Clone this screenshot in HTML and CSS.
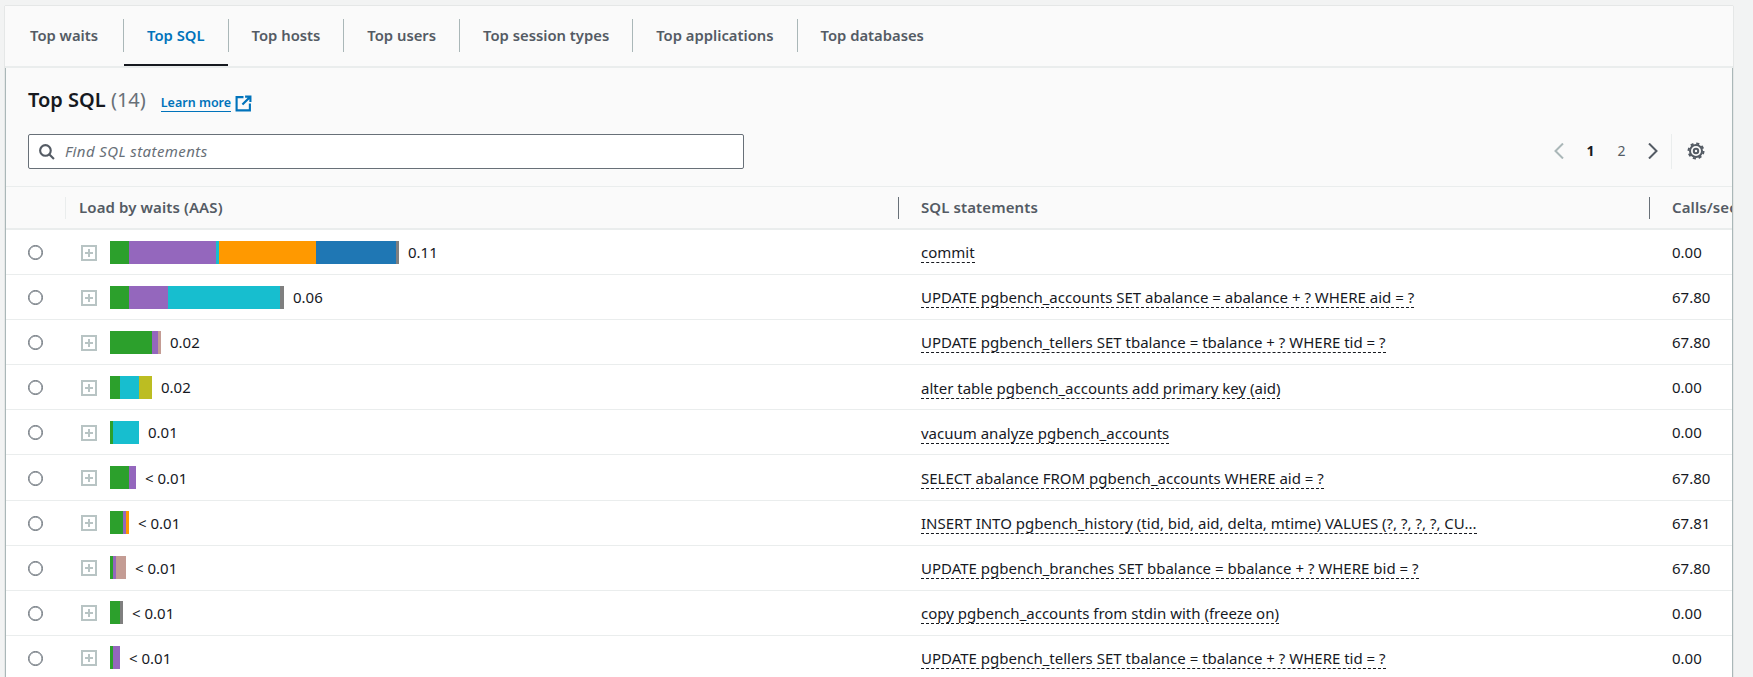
FILE: index.html
```html
<!DOCTYPE html>
<html>
<head>
    <title>Top SQL</title>
    <link rel="stylesheet" href="styles.css">
</head>
<body>

<div class="container">
    <div class="tabs">
        <a class="tab first">Top waits</a>
        <a class="tab active">Top SQL</a>
        <a class="tab">Top hosts</a>
        <a class="tab">Top users</a>
        <a class="tab">Top session types</a>
        <a class="tab">Top applications</a>
        <a class="tab last">Top databases</a>
    </div>

    <div class="panel">
        <div class="panel-head">
            <h2>Top SQL <span class="count">(14)</span></h2>
            <a class="learn"><span>Learn more</span>
                <svg class="ext" viewBox="0 0 16 16" width="17" height="17"><path d="M8 2H1.500v12.500H14V8M7 9l7-7M9.500 1.500H14.500V6.500" fill="none" stroke="#0073bb" stroke-width="2"/></svg>
            </a>
        </div>

        <div class="toolbar">
            <div class="search">
                <svg viewBox="0 0 16 16" width="17" height="17"><circle cx="7" cy="7" r="5" fill="none" stroke="#545b64" stroke-width="2"/><path d="M10.500 10.500L15 15" stroke="#545b64" stroke-width="2"/></svg>
                <span>Find SQL statements</span>
            </div>
            <div class="pager">
                <svg class="chev prev" viewBox="0 0 16 16" width="16" height="16"><path d="M12 0.500L4.500 8l7.500 7.500" fill="none" stroke="#aab7b8" stroke-width="2"/></svg>
                <span class="page current">1</span>
                <span class="page">2</span>
                <svg class="chev next" viewBox="0 0 16 16" width="16" height="16"><path d="M4 0.500L11.500 8 4 15.500" fill="none" stroke="#545b64" stroke-width="2"/></svg>
                <span class="pager-sep"></span>
                <svg class="gear" viewBox="0 0 18 18" width="18" height="18"><circle cx="9" cy="9" r="6" fill="none" stroke="#545b64" stroke-width="2"/><circle cx="9" cy="9" r="7.500" fill="none" stroke="#545b64" stroke-width="2" stroke-dasharray="3.100 2.790"/><circle cx="9" cy="9" r="2.200" fill="none" stroke="#545b64" stroke-width="2"/></svg>
            </div>
        </div>

        <div class="row head">
            <div class="cell-load"><span class="first-sep"></span>Load by waits (AAS)</div>
            <div class="cell-sql"><span class="col-sep"></span>SQL statements</div>
            <div class="cell-calls"><span class="col-sep"></span>Calls/sec</div>
        </div>

        <div class="row">
            <div class="cell-load"><span class="radio"></span><span class="expand"></span>
                <div class="bar"><i class="green" style="width:19px"></i><i class="purple" style="width:87px"></i><i class="cyan" style="width:3px"></i><i class="orange" style="width:97px"></i><i class="blue" style="width:80px"></i><i class="gray" style="width:3px"></i></div>
                <span class="val">0.11</span></div>
            <div class="cell-sql"><span class="sql">commit</span></div>
            <div class="cell-calls">0.00</div>
        </div>
        <div class="row">
            <div class="cell-load"><span class="radio"></span><span class="expand"></span>
                <div class="bar"><i class="green" style="width:19px"></i><i class="purple" style="width:39px"></i><i class="cyan" style="width:112px"></i><i class="gray" style="width:4px"></i></div>
                <span class="val">0.06</span></div>
            <div class="cell-sql"><span class="sql">UPDATE pgbench_accounts SET abalance = abalance + ? WHERE aid = ?</span></div>
            <div class="cell-calls">67.80</div>
        </div>
        <div class="row">
            <div class="cell-load"><span class="radio"></span><span class="expand"></span>
                <div class="bar"><i class="green" style="width:42px"></i><i class="purple" style="width:6px"></i><i class="tan" style="width:3px"></i></div>
                <span class="val">0.02</span></div>
            <div class="cell-sql"><span class="sql">UPDATE pgbench_tellers SET tbalance = tbalance + ? WHERE tid = ?</span></div>
            <div class="cell-calls">67.80</div>
        </div>
        <div class="row">
            <div class="cell-load"><span class="radio"></span><span class="expand"></span>
                <div class="bar"><i class="green" style="width:10px"></i><i class="cyan" style="width:19px"></i><i class="olive" style="width:13px"></i></div>
                <span class="val">0.02</span></div>
            <div class="cell-sql"><span class="sql">alter table pgbench_accounts add primary key (aid)</span></div>
            <div class="cell-calls">0.00</div>
        </div>
        <div class="row">
            <div class="cell-load"><span class="radio"></span><span class="expand"></span>
                <div class="bar"><i class="green" style="width:3px"></i><i class="cyan" style="width:26px"></i></div>
                <span class="val">0.01</span></div>
            <div class="cell-sql"><span class="sql">vacuum analyze pgbench_accounts</span></div>
            <div class="cell-calls">0.00</div>
        </div>
        <div class="row">
            <div class="cell-load"><span class="radio"></span><span class="expand"></span>
                <div class="bar"><i class="green" style="width:19px"></i><i class="purple" style="width:7px"></i></div>
                <span class="val">&lt; 0.01</span></div>
            <div class="cell-sql"><span class="sql">SELECT abalance FROM pgbench_accounts WHERE aid = ?</span></div>
            <div class="cell-calls">67.80</div>
        </div>
        <div class="row">
            <div class="cell-load"><span class="radio"></span><span class="expand"></span>
                <div class="bar"><i class="green" style="width:13px"></i><i class="purple" style="width:3px"></i><i class="orange" style="width:3px"></i></div>
                <span class="val">&lt; 0.01</span></div>
            <div class="cell-sql"><span class="sql">INSERT INTO pgbench_history (tid, bid, aid, delta, mtime) VALUES (?, ?, ?, ?, CU...</span></div>
            <div class="cell-calls">67.81</div>
        </div>
        <div class="row">
            <div class="cell-load"><span class="radio"></span><span class="expand"></span>
                <div class="bar"><i class="green" style="width:3px"></i><i class="purple" style="width:3px"></i><i class="tan" style="width:10px"></i></div>
                <span class="val">&lt; 0.01</span></div>
            <div class="cell-sql"><span class="sql">UPDATE pgbench_branches SET bbalance = bbalance + ? WHERE bid = ?</span></div>
            <div class="cell-calls">67.80</div>
        </div>
        <div class="row">
            <div class="cell-load"><span class="radio"></span><span class="expand"></span>
                <div class="bar"><i class="green" style="width:10px"></i><i class="gray" style="width:3px"></i></div>
                <span class="val">&lt; 0.01</span></div>
            <div class="cell-sql"><span class="sql">copy pgbench_accounts from stdin with (freeze on)</span></div>
            <div class="cell-calls">0.00</div>
        </div>
        <div class="row">
            <div class="cell-load"><span class="radio"></span><span class="expand"></span>
                <div class="bar"><i class="green" style="width:3px"></i><i class="purple" style="width:7px"></i></div>
                <span class="val">&lt; 0.01</span></div>
            <div class="cell-sql"><span class="sql">UPDATE pgbench_tellers SET tbalance = tbalance + ? WHERE tid = ?</span></div>
            <div class="cell-calls">0.00</div>
        </div>
    </div>
</div>

</body>
</html>
```

FILE: styles.css
```css
html, body {
    height: 100%;
    overflow: hidden;
}

body {
    font-family: "Noto Sans", Arial, sans-serif;
    font-size: 15px;
    color: #16191f;
    background-color: #f2f3f3;
    margin: 0;
    padding: 6px 20px 0 5px;
    box-sizing: border-box;
}

.container {
    display: flex;
    flex-direction: column;
    height: 100%;
    background-color: #fafafa;
    box-shadow: 0 0 1px rgba(0, 28, 36, 0.3);
}

/* tabs */
.tabs {
    display: flex;
    flex: none;
    height: 62px;
    box-sizing: border-box;
    border-bottom: 2px solid #eaeded;
    padding-top: 13px;
}

.tab {
    position: relative;
    display: flex;
    align-items: center;
    box-sizing: border-box;
    height: 33px;
    padding: 0 23px 2px;
    border-right: 1px solid #aab7b8;
    font-weight: 600;
    color: #545b64;
    font-size: 14.800px;
}

.tab.first {
    padding-left: 25px;
    padding-right: 25px;
}

.tab.last {
    border-right: none;
}

.tab.active {
    color: #0073bb;
}

.tab.active::after {
    content: "";
    position: absolute;
    left: 0;
    right: 0;
    bottom: -14px;
    height: 2px;
    background-color: #16191f;
}

/* heading */
.panel {
    flex: 1;
    min-height: 0;
    border-left: 1px solid #aab7b8;
    border-right: 1px solid #aab7b8;
    overflow: hidden;
}

.panel-head {
    display: flex;
    align-items: baseline;
    box-sizing: border-box;
    height: 66px;
    padding: 20px 0 0 22px;
}

h2 {
    margin: 0;
    font-size: 20px;
    font-weight: 600;
    line-height: 24px;
}

.count {
    font-weight: 400;
    color: #687078;
}

.learn {
    display: flex;
    align-items: center;
    margin-left: 15px;
    color: #0073bb;
    font-size: 12.500px;
    font-weight: 600;
}

.learn span {
    border-bottom: 1px solid #0073bb;
}

.ext {
    margin-left: 4px;
}

/* search and pager */
.toolbar {
    display: flex;
    justify-content: space-between;
    align-items: center;
    height: 35px;
    padding-left: 22px;
    margin-bottom: 17px;
}

.search {
    display: flex;
    align-items: center;
    width: 716px;
    height: 35px;
    box-sizing: border-box;
    padding-left: 9px;
    background-color: #fff;
    border: 1px solid #687078;
    border-radius: 2px;
    font-style: italic;
    letter-spacing: 0.400px;
    color: #687078;
}

.search span {
    margin: 0 0 2px 10px;
}

.pager {
    display: flex;
    align-items: center;
    height: 35px;
}

.chev {
    display: block;
    margin-bottom: 2px;
}

.prev {
    margin-right: 8px;
}

.next {
    margin-left: 8px;
}

.page {
    width: 31px;
    margin-bottom: 2px;
    text-align: center;
    color: #545b64;
    font-size: 14px;
}

.page.current {
    font-weight: 700;
    color: #16191f;
}

.pager-sep {
    width: 1px;
    height: 35px;
    background-color: #eaeded;
    margin: 0 15px 0 10px;
}

.gear {
    display: block;
    margin: 0 27px 2px 0;
}

/* table */
.row {
    display: grid;
    grid-template-columns: 892px 751px 200px;
    height: 45.100px;
    box-sizing: border-box;
    background-color: #fff;
    border-bottom: 1px solid #eaeded;
    align-items: center;
}

.row.head {
    height: 44px;
    padding-bottom: 2px;
    background-color: #fafafa;
    border-top: 1px solid #eaeded;
    border-bottom: 2px solid #eaeded;
    font-weight: 600;
    letter-spacing: 0.100px;
    color: #545b64;
}

.cell-load {
    display: flex;
    align-items: center;
    padding-left: 22px;
}

.head .cell-load {
    padding-left: 73px;
    position: relative;
}

.cell-sql,
.cell-calls {
    position: relative;
    padding-left: 23px;
    white-space: nowrap;
}

.first-sep {
    position: absolute;
    left: 59px;
    top: 0;
    width: 1px;
    height: 22px;
    background-color: #eaeded;
}

.col-sep {
    position: absolute;
    left: 0;
    top: 0;
    width: 1px;
    height: 22px;
    background-color: #687078;
}

.radio {
    width: 13px;
    height: 13px;
    margin-top: 1px;
    border: 1px solid #687078;
    box-shadow: inset 0 0 0 0.500px #687078;
    border-radius: 50%;
    flex: none;
}

.expand {
    position: relative;
    width: 12px;
    height: 12px;
    margin: 1px 0 0 38px;
    border: 2px solid #b8c4c4;
    background-color: #fff;
    flex: none;
}

.expand::before,
.expand::after {
    content: "";
    position: absolute;
    background-color: #b8c4c4;
}

.expand::before {
    left: 2px;
    right: 2px;
    top: 5px;
    height: 2px;
}

.expand::after {
    top: 2px;
    bottom: 2px;
    left: 5px;
    width: 2px;
}

.bar {
    display: flex;
    height: 23px;
    margin-left: 13px;
}

.bar i {
    display: block;
}

.green { background-color: #2ca02c; }
.purple { background-color: #9467bd; }
.cyan { background-color: #17becf; }
.orange { background-color: #ff9900; }
.blue { background-color: #1f77b4; }
.gray { background-color: #7f7f7f; }
.tan { background-color: #c49c94; }
.olive { background-color: #bcbd22; }

.val {
    margin-left: 9px;
}

.sql {
    display: inline-block;
    vertical-align: middle;
    line-height: 20px;
    border-bottom: 1px dashed #16191f;
}
```
